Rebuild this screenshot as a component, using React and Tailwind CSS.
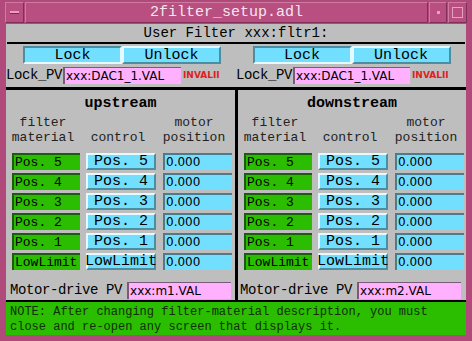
const rows = ["Pos. 5", "Pos. 4", "Pos. 3", "Pos. 2", "Pos. 1", "LowLimit"];

const mono = { fontFamily: '"Liberation Mono", "DejaVu Sans Mono", monospace' };

const LockButtons = () => (
  <div className="flex h-[18px]">
    <div className="w-[99px] bg-[#73dfff] border-2 border-t-[#4c8ea0] border-l-[#4c8ea0] border-b-[#e6f9ff] border-r-[#e6f9ff] flex items-center justify-center text-[15px] leading-none text-black">
      Lock
    </div>
    <div className="w-[99px] bg-[#73dfff] border-2 border-t-[#e6f9ff] border-l-[#e6f9ff] border-b-[#4c8ea0] border-r-[#4c8ea0] flex items-center justify-center text-[15px] leading-none text-black">
      Unlock
    </div>
  </div>
);

const LockPv = ({ w }) => (
  <div className="flex items-center h-[18px]">
    <span className="text-[14px] leading-none tracking-[-0.4px] whitespace-nowrap">Lock_PV</span>
    <div
      className="ml-[1px] h-[17px] bg-[#ffb0ff] border-l-2 border-t border-[#7a5a7a] flex items-center pl-[1px] text-[12px] leading-none text-black"
      style={{ width: w, fontFamily: '"DejaVu Sans", sans-serif' }}
    >
      xxx:DAC1_1.VAL
    </div>
    <span className="ml-[2px] text-[9px] font-bold text-[#e02020] leading-none" style={{ fontFamily: '"DejaVu Sans", sans-serif' }}>
      INVALII
    </span>
  </div>
);

const Panel = ({ title, pv, pvLeft }) => (
  <div className="flex flex-col">
    <div className="text-center text-[15px] font-bold leading-none mt-[6px] h-[18px]">{title}</div>
    <div className="flex text-[13px] leading-[15px] text-[#222] mt-[1px]">
      <div className="w-[74px] text-center">filter<br />material</div>
      <div className="w-[76px] text-center pt-[15px]">control</div>
      <div className="w-[76px] text-center">motor<br />position</div>
    </div>
    <div className="flex flex-col gap-[3px] mt-[8px] pl-[6px]">
      {rows.map((r) => (
        <div key={r} className="flex h-[17px]">
          <div className="w-[68px] bg-[#2bbd00] border-l-2 border-t-2 border-[#1c5c10] flex items-center pl-[1px] text-[13px] leading-none text-black">
            {r}
          </div>
          <div className="w-[70px] ml-[6px] bg-[#73dfff] border-2 border-t-[#e6f9ff] border-l-[#e6f9ff] border-b-[#4c8ea0] border-r-[#4c8ea0] flex items-center justify-center text-[15px] leading-none text-black">
            {r}
          </div>
          <div className="w-[69px] ml-[7px] bg-[#73dfff] border-l-2 border-t-2 border-[#4c7c8c] flex items-center pl-[1px] text-[12px] leading-none text-black" style={{ fontFamily: '"DejaVu Sans", sans-serif' }}>
            0.000
          </div>
        </div>
      ))}
    </div>
    <div className="flex items-center h-[17px] mt-[12px] mb-[1px]" style={{ paddingLeft: pvLeft }}>
      <span className="text-[14px] leading-none tracking-[-0.4px] whitespace-nowrap">Motor-drive PV</span>
      <div className="ml-[5px] w-[104px] h-[17px] bg-[#ffb0ff] border-l-2 border-t border-[#7a5a7a] flex items-center pl-[1px] text-[12px] leading-none" style={{ fontFamily: '"DejaVu Sans", sans-serif' }}>
        {pv}
      </div>
    </div>
  </div>
);

export default function App() {
  return (
    <div className="w-[472px] h-[341px] bg-[#b04a7a] relative overflow-hidden" style={mono}>
      {/* title bar */}
      <div className="h-[24px] flex items-stretch pt-[2px] pb-[1px] px-[5px] gap-[1px]">
        <div className="w-[19px] bg-[#b84f80] border border-t-[#d07aa0] border-l-[#d07aa0] border-b-[#803058] border-r-[#803058] flex items-center justify-center">
          <div className="w-[9px] h-[3px] bg-[#e8a0c0] border-b border-[#802850]" />
        </div>
        <div className="flex-1 bg-[#b84f80] border border-t-[#d07aa0] border-l-[#d07aa0] border-b-[#803058] border-r-[#803058] flex items-center justify-center text-[15px] text-[#f6e6ee] leading-none">
          2filter_setup.adl
        </div>
        <div className="w-[18px] bg-[#b84f80] border border-t-[#d07aa0] border-l-[#d07aa0] border-b-[#803058] border-r-[#803058] flex items-center justify-center">
          <div className="w-[3px] h-[3px] bg-[#e8a0c0]" />
        </div>
        <div className="w-[19px] bg-[#b84f80] border border-t-[#d07aa0] border-l-[#d07aa0] border-b-[#803058] border-r-[#803058] flex items-center justify-center">
          <div className="w-[11px] h-[11px] border border-[#e8a0c0]" />
        </div>
      </div>

      {/* content */}
      <div className="absolute left-[6px] top-[24px] w-[460px] h-[311px] bg-[#bebebe] flex flex-col text-black">
        <div className="h-[18px] text-center text-[14px] leading-[18px]">User Filter xxx:fltr1:</div>
        <div className="h-[3px] bg-black mx-[1px]" />
        <div className="flex mt-[2px]">
          <div className="w-[230px] flex justify-center pl-[2px]"><LockButtons /></div>
          <div className="w-[230px] flex justify-center pl-[1px]"><LockButtons /></div>
        </div>
        <div className="flex mt-[2px]">
          <div className="w-[230px]"><LockPv w={118} /></div>
          <div className="w-[230px]"><LockPv w={117} /></div>
        </div>
        <div className="h-[3px] bg-black mt-[3px]" />
        <div className="flex">
          <div className="w-[229px]"><Panel title="upstream" pv="xxx:m1.VAL" pvLeft={4} /></div>
          <div className="w-[3px] bg-black" />
          <div className="w-[228px]"><Panel title="downstream" pv="xxx:m2.VAL" pvLeft={2} /></div>
        </div>
        <div className="h-[3px] bg-black" />
        <div className="flex-1 bg-[#2bbd00] px-[4px] pt-[3px] text-[12px] leading-[15px] text-[#10300a]">
          NOTE: After changing filter-material description, you must<br />
          close and re-open any screen that displays it.
        </div>
      </div>
    </div>
  );
}
